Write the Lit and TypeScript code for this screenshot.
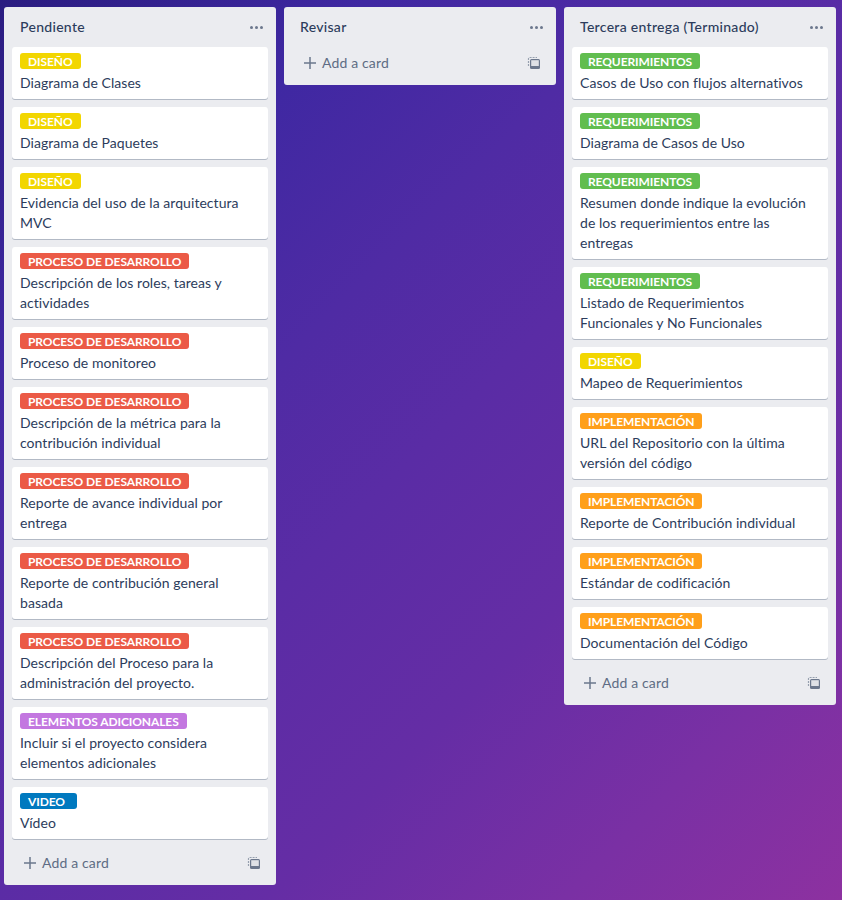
import { LitElement, html, css, svg } from "lit";
import { customElement } from "lit/decorators.js";

type Tag = "dis" | "pro" | "ele" | "vid" | "req" | "imp";

interface Card {
  tag: Tag;
  lines: string[];
}

interface List {
  title: string;
  cards: Card[];
}

const TAGS: Record<Tag, string> = {
  dis: "DISEÑO",
  pro: "PROCESO DE DESARROLLO",
  ele: "ELEMENTOS ADICIONALES",
  vid: "VIDEO",
  req: "REQUERIMIENTOS",
  imp: "IMPLEMENTACIÓN",
};

const LISTS: List[] = [
  {
    title: "Pendiente",
    cards: [
      { tag: "dis", lines: ["Diagrama de Clases"] },
      { tag: "dis", lines: ["Diagrama de Paquetes"] },
      { tag: "dis", lines: ["Evidencia del uso de la arquitectura", "MVC"] },
      { tag: "pro", lines: ["Descripción de los roles, tareas y", "actividades"] },
      { tag: "pro", lines: ["Proceso de monitoreo"] },
      { tag: "pro", lines: ["Descripción de la métrica para la", "contribución individual"] },
      { tag: "pro", lines: ["Reporte de avance individual por", "entrega"] },
      { tag: "pro", lines: ["Reporte de contribución general", "basada"] },
      { tag: "pro", lines: ["Descripción del Proceso para la", "administración del proyecto."] },
      { tag: "ele", lines: ["Incluir si el proyecto considera", "elementos adicionales"] },
      { tag: "vid", lines: ["Vídeo"] },
    ],
  },
  { title: "Revisar", cards: [] },
  {
    title: "Tercera entrega (Terminado)",
    cards: [
      { tag: "req", lines: ["Casos de Uso con flujos alternativos"] },
      { tag: "req", lines: ["Diagrama de Casos de Uso"] },
      {
        tag: "req",
        lines: [
          "Resumen donde indique la evolución",
          "de los requerimientos entre las",
          "entregas",
        ],
      },
      { tag: "req", lines: ["Listado de Requerimientos", "Funcionales y No Funcionales"] },
      { tag: "dis", lines: ["Mapeo de Requerimientos"] },
      { tag: "imp", lines: ["URL del Repositorio con la última", "versión del código"] },
      { tag: "imp", lines: ["Reporte de Contribución individual"] },
      { tag: "imp", lines: ["Estándar de codificación"] },
      { tag: "imp", lines: ["Documentación del Código"] },
    ],
  },
];

const templateIcon = svg`<svg class="tpl" width="16" height="16" viewBox="0 0 16 16">
  <path d="M2.500 11V3.500A1 1 0 0 1 3.500 2.500H11" fill="none" stroke="#97a0af" stroke-width="1.200" stroke-dasharray="2 1"/>
  <rect x="4" y="4" width="10" height="10" rx="1.500" fill="#6b778c"/>
  <rect x="5.200" y="5.200" width="7.600" height="5.800" fill="#dfe1e6"/>
</svg>`;

@customElement("app-root")
class AppRoot extends LitElement {
  static override styles = css`
    :host {
      display: block;
      height: 900px;
      overflow: hidden;
      font-family: "Lato", sans-serif;
      font-size: 14px;
      line-height: 20px;
      letter-spacing: 0.05px;
      color: #2c3c5c;
      background: linear-gradient(
        135deg,
        #2a1c80 0%,
        #3f28a2 21%,
        #4f2ba4 37%,
        #5a2ca5 50%,
        #652da5 67%,
        #7a30a4 84%,
        #8d31a0 100%
      );
    }
    .board {
      display: flex;
      align-items: flex-start;
      gap: 8px;
      padding: 7px 4px 0;
    }
    .list {
      width: 272px;
      flex: none;
      background: #ebecf0;
      border-radius: 3px;
    }
    .head {
      display: flex;
      align-items: center;
      justify-content: space-between;
      height: 40px;
      padding: 0 10px 0 16px;
      font-weight: 500;
      letter-spacing: 0.3px;
    }
    .dots {
      display: flex;
      gap: 2px;
      margin-right: 3px;
    }
    .dots i {
      width: 3px;
      height: 3px;
      border-radius: 50%;
      background: #6b778c;
    }
    .cards {
      display: flex;
      flex-direction: column;
      gap: 8px;
      padding: 0 8px 8px;
    }
    .card {
      background: #fff;
      border-radius: 3px;
      box-shadow: 0 1px 0 #091e4240;
      padding: 6px 8px;
    }
    .label {
      display: block;
      width: fit-content;
      height: 16px;
      margin-bottom: 4px;
      padding: 0 8px;
      border-radius: 3px;
      color: #fff;
      font-size: 12px;
      font-weight: 700;
      line-height: 17px;
      letter-spacing: -0.1px;
    }
    .dis { background: #f2d600; }
    .pro { background: #eb5a46; }
    .ele { background: #c377e0; }
    .vid { background: #0079bf; padding-right: 12px; }
    .req { background: #61bd4f; }
    .imp { background: #ff9f1a; }
    .line {
      display: block;
      white-space: nowrap;
    }
    .foot {
      display: flex;
      align-items: center;
      justify-content: space-between;
      height: 32px;
      margin-bottom: 6px;
      padding: 0 14px 0 18px;
      color: #5e6c84;
      letter-spacing: 0.15px;
    }
    .add {
      display: flex;
      align-items: center;
      gap: 4px;
    }
    .tpl {
      display: block;
    }
  `;

  renderCard(card: Card) {
    return html`<div class="card">
      <span class="label ${card.tag}">${TAGS[card.tag]}</span>
      ${card.lines.map((l) => html`<span class="line">${l}</span>`)}
    </div>`;
  }

  renderList(list: List) {
    return html`<section class="list">
      <header class="head">
        <span>${list.title}</span>
        <span class="dots"><i></i><i></i><i></i></span>
      </header>
      ${list.cards.length
        ? html`<div class="cards">${list.cards.map((c) => this.renderCard(c))}</div>`
        : ""}
      <footer class="foot">
        <span class="add">
          <svg width="16" height="16" viewBox="0 0 16 16">
            <path d="M8 2v12M2 8h12" stroke="#6b778c" stroke-width="1.500"/>
          </svg>
          Add a card
        </span>
        ${templateIcon}
      </footer>
    </section>`;
  }

  override render() {
    return html`<main class="board">${LISTS.map((l) => this.renderList(l))}</main>`;
  }
}

declare global {
  interface HTMLElementTagNameMap {
    "app-root": AppRoot;
  }
}
